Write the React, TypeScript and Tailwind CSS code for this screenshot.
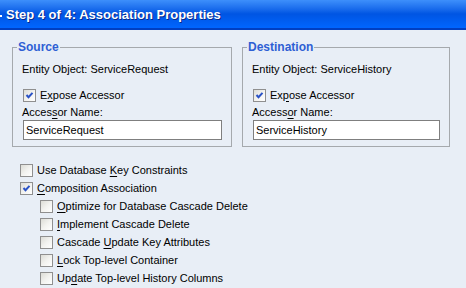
import React from 'react';

const font = { fontFamily: '"Liberation Sans", Arial, sans-serif' };

// renders label with one underlined access key
const AccessLabel = ({ text, at }: { text: string; at: number }) => (
  <span>
    {text.slice(0, at)}
    <span className="underline underline-offset-[2px]">{text[at]}</span>
    {text.slice(at + 1)}
  </span>
);

const CheckBox = ({ checked }: { checked?: boolean }) => (
  <span className="relative inline-block w-[13px] h-[13px] shrink-0 border border-[#8f8f8f] bg-gradient-to-br from-[#dcdcd6] via-[#f2f2ef] to-white">
    {checked && (
      <svg className="absolute left-[1px] top-[1px]" width="9" height="9" viewBox="0 0 9 9">
        <path d="M1.5 4 L3.5 6.2 L7.5 1.8" stroke="#2a52c6" strokeWidth="2" fill="none" />
      </svg>
    )}
  </span>
);

const CheckRow = ({ label, at, checked, indent }: { label: string; at: number; checked?: boolean; indent?: boolean }) => (
  <div className={`flex items-center gap-[4px] h-[18px] ${indent ? 'pl-[40px]' : 'pl-[20px]'}`}>
    <CheckBox checked={checked} />
    <AccessLabel text={label} at={at} />
  </div>
);

const GroupBox = ({
  title,
  entity,
  exposeAt,
  nameAt,
  value,
  width,
}: {
  title: string;
  entity: string;
  exposeAt: number;
  nameAt: number;
  value: string;
  width: string;
}) => (
  <fieldset className={`${width} border border-[#a5a9ad] px-[9px] pb-[6px]`}>
    <legend className="-ml-[5px] px-[1px] text-[12px] leading-[16px] font-bold text-[#2e5fd4]">{title}</legend>
    <div className="pt-[7px] h-[21px] leading-[14px]">Entity Object: {entity}</div>
    <div className="mt-[12px] flex items-center gap-[4px] h-[14px] pl-[1px]">
      <CheckBox checked />
      <AccessLabel text="Expose Accessor" at={exposeAt} />
    </div>
    <div className="mt-[3px] leading-[14px]">
      <AccessLabel text="Accessor Name:" at={nameAt} />
    </div>
    <div className="mt-[1px] ml-[1px] h-[20px] border border-[#7f7f7f] bg-white flex items-center pl-[2px]">{value}</div>
  </fieldset>
);

export default function App() {
  return (
    <div className="w-[466px] h-[288px] overflow-hidden bg-[#e8eef6] text-[11px] text-black" style={font}>
      <div className="relative h-[30px] bg-gradient-to-b from-[#3d8ffb] via-[#0055e3] to-[#0066ff] border-b-2 border-[#003fc2] flex items-center">
        <span className="absolute left-0 top-[15px] w-[2px] h-[2px] bg-white" />
        <span className="pl-[6px] pt-[1px] text-white font-bold text-[13px] [text-shadow:1px_1px_0_#0a2a8a]">
          Step 4 of 4: Association Properties
        </span>
      </div>
      <div className="flex gap-[10px] pl-[12px] pt-[9px]">
        <GroupBox title="Source" entity="ServiceRequest" exposeAt={1} nameAt={5} value="ServiceRequest" width="w-[220px]" />
        <GroupBox title="Destination" entity="ServiceHistory" exposeAt={2} nameAt={6} value="ServiceHistory" width="w-[208px]" />
      </div>
      <div className="pt-[14px]">
        <CheckRow label="Use Database Key Constraints" at={13} />
        <CheckRow label="Composition Association" at={0} checked />
        <CheckRow label="Optimize for Database Cascade Delete" at={0} indent />
        <CheckRow label="Implement Cascade Delete" at={0} indent />
        <CheckRow label="Cascade Update Key Attributes" at={8} indent />
        <CheckRow label="Lock Top-level Container" at={0} indent />
        <CheckRow label="Update Top-level History Columns" at={2} indent />
      </div>
    </div>
  );
}
